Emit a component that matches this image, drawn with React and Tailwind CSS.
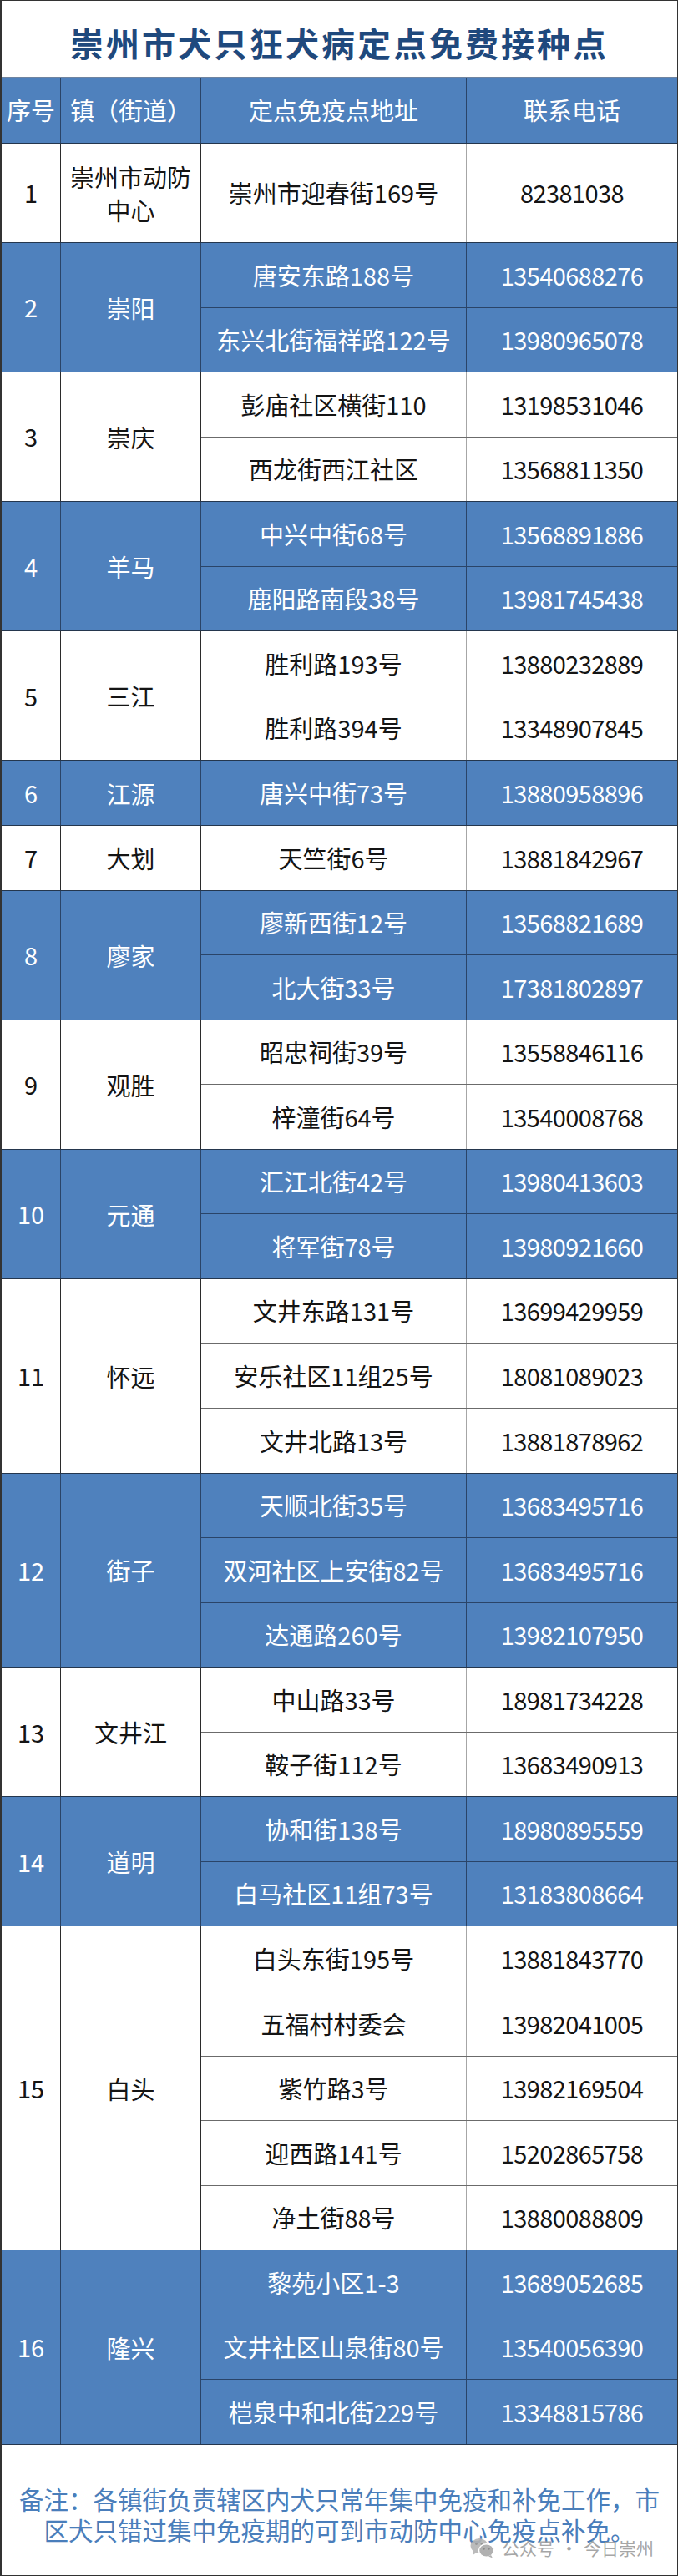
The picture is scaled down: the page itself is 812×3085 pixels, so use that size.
import React from "react";

const GROUPS = [
  { seq: 1, town: "崇州市动防中心", rows: [["崇州市迎春街169号", "82381038"]] },
  { seq: 2, town: "崇阳", rows: [["唐安东路188号", "13540688276"], ["东兴北街福祥路122号", "13980965078"]] },
  { seq: 3, town: "崇庆", rows: [["彭庙社区横街110", "13198531046"], ["西龙街西江社区", "13568811350"]] },
  { seq: 4, town: "羊马", rows: [["中兴中街68号", "13568891886"], ["鹿阳路南段38号", "13981745438"]] },
  { seq: 5, town: "三江", rows: [["胜利路193号", "13880232889"], ["胜利路394号", "13348907845"]] },
  { seq: 6, town: "江源", rows: [["唐兴中街73号", "13880958896"]] },
  { seq: 7, town: "大划", rows: [["天竺街6号", "13881842967"]] },
  { seq: 8, town: "廖家", rows: [["廖新西街12号", "13568821689"], ["北大街33号", "17381802897"]] },
  { seq: 9, town: "观胜", rows: [["昭忠祠街39号", "13558846116"], ["梓潼街64号", "13540008768"]] },
  { seq: 10, town: "元通", rows: [["汇江北街42号", "13980413603"], ["将军街78号", "13980921660"]] },
  {
    seq: 11,
    town: "怀远",
    rows: [["文井东路131号", "13699429959"], ["安乐社区11组25号", "18081089023"], ["文井北路13号", "13881878962"]],
  },
  {
    seq: 12,
    town: "街子",
    rows: [["天顺北街35号", "13683495716"], ["双河社区上安街82号", "13683495716"], ["达通路260号", "13982107950"]],
  },
  { seq: 13, town: "文井江", rows: [["中山路33号", "18981734228"], ["鞍子街112号", "13683490913"]] },
  { seq: 14, town: "道明", rows: [["协和街138号", "18980895559"], ["白马社区11组73号", "13183808664"]] },
  {
    seq: 15,
    town: "白头",
    rows: [
      ["白头东街195号", "13881843770"],
      ["五福村村委会", "13982041005"],
      ["紫竹路3号", "13982169504"],
      ["迎西路141号", "15202865758"],
      ["净土街88号", "13880088809"],
    ],
  },
  {
    seq: 16,
    town: "隆兴",
    rows: [["黎苑小区1-3", "13689052685"], ["文井社区山泉街80号", "13540056390"], ["桤泉中和北街229号", "13348815786"]],
  },
];

const HEIGHTS = {
  1: "h-[77.56px]",
  2: "h-[155.12px]",
  3: "h-[232.68px]",
  5: "h-[387.8px]",
};

function Group({ seq, town, rows }) {
  const blue = seq % 2 === 0;
  const h = seq === 1 ? "h-[119px]" : HEIGHTS[rows.length];
  const bg = blue ? "bg-[#4f81bd] text-white" : "bg-white text-[#141414]";
  const lineMain = blue ? "border-[#2a4468]" : "border-[#2b2b2b]";
  const lineAddr = blue ? "border-[#2a4468]" : "border-[#a6a6a6]";
  const lineSub = blue ? "border-[#2a4468]" : "border-[#6b6b6b]";
  return (
    <div className={`flex border-t border-[#24364d] ${h} ${bg}`}>
      <div className={`w-[71px] shrink-0 border-r ${lineMain} flex items-center justify-center`}>{seq}</div>
      <div
        className={`w-[168px] shrink-0 border-r ${lineMain} flex items-center justify-center px-[8px] text-center leading-[40px]`}
      >
        {town}
      </div>
      <div className="flex-1 flex flex-col">
        {rows.map(([a, p], i) => (
          <div key={i} className={`flex-1 flex ${i > 0 ? `border-t ${lineSub}` : ""}`}>
            <div className={`w-[318px] shrink-0 border-r ${lineAddr} flex items-center justify-center`}>{a}</div>
            <div className="flex-1 flex items-center justify-center tracking-[-0.6px]">{p}</div>
          </div>
        ))}
      </div>
    </div>
  );
}

function WeChatIcon() {
  return (
    <svg width="30" height="25" viewBox="0 0 30 25">
      <ellipse cx="11" cy="10" rx="10.5" ry="9" fill="#b4b4b4" />
      <path d="M4 16 L3 21 L8 18 Z" fill="#b4b4b4" />
      <circle cx="7.5" cy="7.5" r="1.4" fill="#8c8c8c" />
      <circle cx="14" cy="7.5" r="1.4" fill="#8c8c8c" />
      <ellipse cx="19.5" cy="15.5" rx="9" ry="7.8" fill="#a9a9a9" stroke="#ffffff" strokeWidth="1.5" />
      <path d="M25 21 L27 24.5 L22 22.5 Z" fill="#a9a9a9" />
      <circle cx="16.5" cy="13.5" r="1.2" fill="#7f7f7f" />
      <circle cx="22.5" cy="13.5" r="1.2" fill="#7f7f7f" />
    </svg>
  );
}

export default function App() {
  return (
    <div className="w-[812px] h-[3085px] bg-white border-l-2 border-r border-t border-b border-[#333333] font-['Noto_Sans_CJK_SC','Noto_Sans',sans-serif] flex flex-col">
      {/* Title */}
      <div className="h-[91px] shrink-0 flex items-center justify-center pt-[8px]">
        <h1 className="text-[40px] font-bold tracking-[3px] text-[#1f497d] leading-none">
          崇州市犬只狂犬病定点免费接种点
        </h1>
      </div>

      {/* Header */}
      <div className="h-[79px] shrink-0 flex border-t border-[#6f84a0] bg-[#4f81bd] text-white text-[29px]">
        <div className="w-[71px] shrink-0 border-r border-[#2a4468] flex items-center justify-center">序号</div>
        <div className="w-[168px] shrink-0 border-r border-[#2a4468] flex items-center justify-center">镇（街道）</div>
        <div className="w-[318px] shrink-0 border-r border-[#2a4468] flex items-center justify-center">
          定点免疫点地址
        </div>
        <div className="flex-1 flex items-center justify-center">联系电话</div>
      </div>

      {/* Body */}
      <div className="shrink-0 flex flex-col text-[29px]">
        {GROUPS.map((g) => (
          <Group key={g.seq} {...g} />
        ))}
      </div>

      {/* Footer */}
      <div className="relative flex-1 border-t border-[#24364d] bg-white pt-[46px]">
        <p className="text-center text-[29.5px] leading-[37px] text-[#4a7ebb]">
          备注：各镇街负责辖区内犬只常年集中免疫和补免工作，市
          <br />
          区犬只错过集中免疫期的可到市动防中心免疫点补免。
        </p>
        <div className="absolute left-[561px] top-[111px] flex items-center gap-[8px] text-[21px] leading-none text-[#9d9d9d] opacity-90">
          <WeChatIcon />
          <span>
            公众号<span className="mx-[7px]">·</span>今日崇州
          </span>
        </div>
      </div>
    </div>
  );
}
